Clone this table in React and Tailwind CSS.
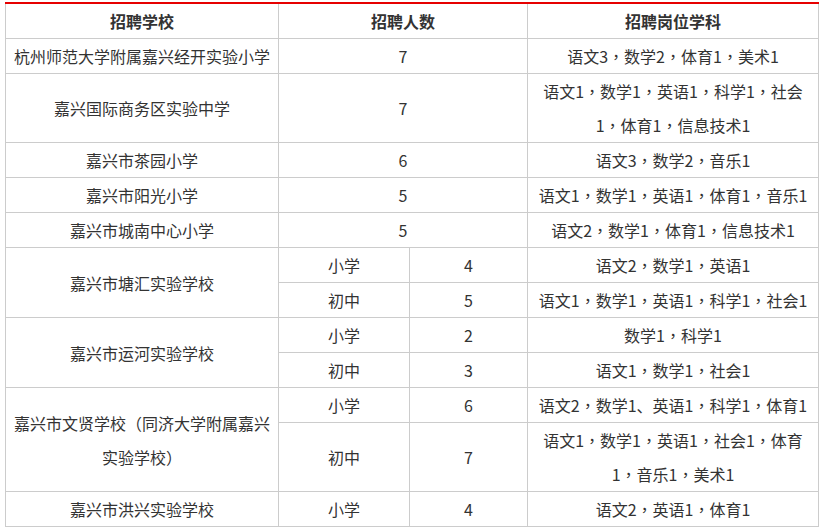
import { Fragment } from "react";

const rows = [
  { school: "杭州师范大学附属嘉兴经开实验小学", items: [{ count: "7", subjects: "语文3，数学2，体育1，美术1" }] },
  { school: "嘉兴国际商务区实验中学", items: [{ count: "7", subjects: "语文1，数学1，英语1，科学1，社会1，体育1，信息技术1" }] },
  { school: "嘉兴市茶园小学", items: [{ count: "6", subjects: "语文3，数学2，音乐1" }] },
  { school: "嘉兴市阳光小学", items: [{ count: "5", subjects: "语文1，数学1，英语1，体育1，音乐1" }] },
  { school: "嘉兴市城南中心小学", items: [{ count: "5", subjects: "语文2，数学1，体育1，信息技术1" }] },
  {
    school: "嘉兴市塘汇实验学校",
    items: [
      { level: "小学", count: "4", subjects: "语文2，数学1，英语1" },
      { level: "初中", count: "5", subjects: "语文1，数学1，英语1，科学1，社会1" },
    ],
  },
  {
    school: "嘉兴市运河实验学校",
    items: [
      { level: "小学", count: "2", subjects: "数学1，科学1" },
      { level: "初中", count: "3", subjects: "语文1，数学1，社会1" },
    ],
  },
  {
    school: "嘉兴市文贤学校（同济大学附属嘉兴实验学校）",
    items: [
      { level: "小学", count: "6", subjects: "语文2，数学1、英语1，科学1，体育1" },
      { level: "初中", count: "7", subjects: "语文1，数学1，英语1，社会1，体育1，音乐1，美术1" },
    ],
  },
  { school: "嘉兴市洪兴实验学校", items: [{ level: "小学", count: "4", subjects: "语文2，英语1，体育1" }] },
];

const cell = "border border-[#cccccc] text-center align-middle px-[5px] leading-[34px] h-[35px]";

// the screenshot's full-width commas sit centred in their box, as a TC font draws them
function Subjects({ text }) {
  const parts = text.split("，");
  return parts.map((p, i) => (
    <Fragment key={i}>
      {p}
      {i < parts.length - 1 && <span className="font-['Noto_Sans_CJK_TC']">，</span>}
    </Fragment>
  ));
}

export default function App() {
  return (
    <div
      className="bg-white min-h-screen pl-[5px] pt-[2px] text-[16px] text-[#333333]"
      style={{ fontFamily: '"Noto Sans CJK SC", "Noto Sans", sans-serif' }}
    >
      <table className="table-fixed border-collapse w-[813px]">
        <colgroup>
          <col className="w-[273px]" />
          <col className="w-[131px]" />
          <col className="w-[118px]" />
          <col className="w-[291px]" />
        </colgroup>
        <thead>
          <tr>
            <th className={`${cell} font-bold border-t-2 border-t-[#e60000]`}>招聘学校</th>
            <th colSpan={2} className={`${cell} font-bold border-t-2 border-t-[#e60000]`}>招聘人数</th>
            <th className={`${cell} font-bold border-t-2 border-t-[#e60000]`}>招聘岗位学科</th>
          </tr>
        </thead>
        <tbody>
          {rows.map((r) =>
            r.items.map((it, i) => (
              <tr key={r.school + i}>
                {i === 0 && (
                  <td rowSpan={r.items.length} className={cell}>
                    {r.school}
                  </td>
                )}
                {it.level ? (
                  <>
                    <td className={cell}>{it.level}</td>
                    <td className={cell}>{it.count}</td>
                  </>
                ) : (
                  <td colSpan={2} className={cell}>{it.count}</td>
                )}
                <td className={cell}>
                  <Subjects text={it.subjects} />
                </td>
              </tr>
            ))
          )}
        </tbody>
      </table>
    </div>
  );
}
